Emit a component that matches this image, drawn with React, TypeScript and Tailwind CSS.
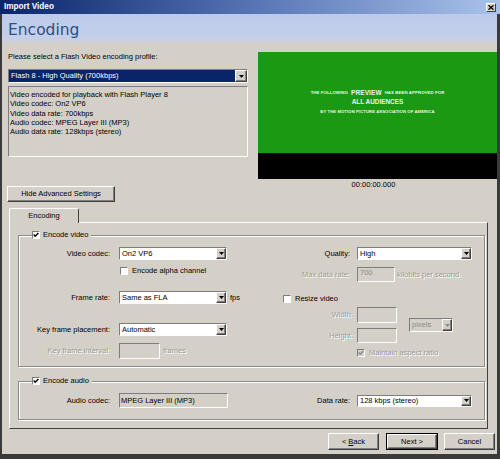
import React from 'react';

const sunken = 'border border-t-[#7d7d7d] border-l-[#7d7d7d] border-r-white border-b-white';
const raised = 'border border-t-white border-l-white border-r-[#404040] border-b-[#404040]';
const etched = 'border border-[#8a8a8a] shadow-[inset_1px_1px_0_#ffffff,1px_1px_0_#ffffff]';
const dim = 'text-[#9d9b95] [text-shadow:1px_1px_0_#ffffff]';

function DropButton({ disabled, w = 'w-[10px]' }: { disabled?: boolean; w?: string }) {
    return (
        <span className={`flex ${w} shrink-0 items-center justify-center bg-[#d4d0c8] ${raised} shadow-[inset_-1px_-1px_0_#808080]`}>
            <svg width="5" height="3" viewBox="0 0 5 3">
                <path d="M0 0h5L2.5 3z" fill={disabled ? '#8a8a8a' : '#000'} />
            </svg>
        </span>
    );
}

interface SelectProps {
    value: string;
    className?: string;
    selected?: boolean;
    disabled?: boolean;
    btn?: string;
}

function Select({ value, className = '', selected, disabled, btn }: SelectProps) {
    return (
        <div className={`flex ${sunken} ${disabled ? 'bg-[#d4d0c8]' : 'bg-white'} ${className}`}>
            <span
                className={`flex min-w-0 flex-1 items-center truncate pl-[2px] ${selected ? 'bg-[#0a246a] text-white' : ''} ${disabled ? 'text-[#8c8a85]' : ''}`}
            >
                {value}
            </span>
            <DropButton disabled={disabled} w={btn} />
        </div>
    );
}

function Check({ checked, disabled }: { checked?: boolean; disabled?: boolean }) {
    return (
        <span className={`flex h-[8px] w-[8px] shrink-0 items-center justify-center ${sunken} ${disabled ? 'bg-[#d4d0c8]' : 'bg-white'}`}>
            {checked && (
                <svg width="6" height="6" viewBox="0 0 6 6">
                    <path d="M0.6 2.6l1.6 1.7L5.4 0.9" stroke={disabled ? '#8a8a8a' : '#000'} strokeWidth="1.4" fill="none" />
                </svg>
            )}
        </span>
    );
}

function Field({ value, className = '' }: { value?: string; className?: string }) {
    return (
        <div className={`flex items-start bg-[#d4d0c8] pl-[2px] pt-[1px] text-[#8c8a85] ${sunken} ${className}`}>
            {value}
        </div>
    );
}

function Button({ children, className = '', isDefault }: { children: React.ReactNode; className?: string; isDefault?: boolean }) {
    const inner = (
        <span className={`flex h-full w-full items-center justify-center bg-[#d4d0c8] ${raised} shadow-[inset_-1px_-1px_0_#808080]`}>
            {children}
        </span>
    );
    return isDefault ? (
        <div className={`flex border border-black ${className}`}>{inner}</div>
    ) : (
        <div className={`flex ${className}`}>{inner}</div>
    );
}

export default function App() {
    return (
        <div className="flex h-[459px] w-[500px] flex-col overflow-hidden bg-[#d4d0c8] font-['Liberation_Sans',Arial,sans-serif] text-[7.5px] leading-none text-black">
            {/* Title bar */}
            <div className="flex h-[14px] shrink-0 items-center justify-between bg-gradient-to-r from-[#0a246a] via-[#5674b4] to-[#aac3ea] px-[4px]">
                <span className="text-[8.2px] font-bold leading-none text-white">Import Video</span>
                <span className={`flex h-[9px] w-[10px] items-center justify-center bg-[#d4d0c8] ${raised}`}>
                    <svg width="6" height="5" viewBox="0 0 6 5">
                        <path d="M0.5 0.3l5 4.4M5.5 0.3l-5 4.4" stroke="#000" strokeWidth="1.3" />
                    </svg>
                </span>
            </div>

            <div className="flex flex-1 flex-col border-b-[5px] border-l-[2px] border-r-[3px] border-[#3a3a3a]">
                {/* Header */}
                <div className="flex h-[31px] shrink-0 items-center bg-[linear-gradient(to_bottom,#bccaeb_0%,#c3cfeb_75%,#d4d0c8_100%)] pl-[6px] pt-[2px]">
                    <span className="font-['DejaVu_Sans',Verdana,sans-serif] text-[15.5px] leading-none text-[#2d4f82]">Encoding</span>
                </div>

                <div className="flex flex-1 flex-col pl-[6px] pt-[6px]">
                    {/* Profile + preview */}
                    <div className="flex gap-[10px]">
                        <div className="flex w-[240px] flex-col">
                            <div className="h-[12px] leading-[12px]">Please select a Flash Video encoding profile:</div>
                            <Select className="mt-[6px] h-[14px]" value="Flash 8 - High Quality (700kbps)" selected btn="w-[12px]" />
                            <div className={`mt-[3px] h-[71px] ${sunken} pl-[1px] pt-[3px] leading-[9.3px]`}>
                                <div>Video encoded for playback with Flash Player 8</div>
                                <div>Video codec: On2 VP6</div>
                                <div>Video data rate: 700kbps</div>
                                <div>Audio codec: MPEG Layer III (MP3)</div>
                                <div>Audio data rate: 128kbps (stereo)</div>
                            </div>
                            <Button className="-ml-[1px] mt-[29px] h-[16px] w-[108px]">Hide Advanced Settings</Button>
                        </div>

                        <div className="flex w-[239px] flex-col">
                            <div className="mt-[1px] flex h-[101px] flex-col items-center justify-center bg-[#1b9913] font-bold text-[#eef4ea]">
                                <div className="flex h-[9px] items-center gap-[3px] text-[4.3px] tracking-[0.1px]">
                                    <span>THE FOLLOWING</span>
                                    <span className="text-[6.5px]">PREVIEW</span>
                                    <span>HAS BEEN APPROVED FOR</span>
                                </div>
                                <div className="flex h-[10px] items-center text-[6.4px]">ALL AUDIENCES</div>
                                <div className="flex h-[9px] items-center text-[4.2px] tracking-[0.1px]">
                                    BY THE MOTION PICTURE ASSOCIATION OF AMERICA
                                </div>
                            </div>
                            <div className="h-[26px] bg-black" />
                            <div className="h-[12px] pr-[8px] text-center leading-[12px]">00:00:00.000</div>
                        </div>
                    </div>

                    {/* Tabs */}
                    <div className="mt-[6px] flex flex-col">
                        <div className="flex pl-[1px]">
                            <div className="relative z-10 -mb-[1px] flex h-[15px] w-[70px] items-center justify-center rounded-t-[2px] border-l border-r border-t border-l-white border-r-[#404040] border-t-white bg-[#d4d0c8] pb-[1px]">
                                Encoding
                            </div>
                        </div>
                        <div className="ml-[1px] w-[479px] border border-b-[#404040] border-l-white border-r-[#404040] border-t-white pb-[8px]">
                            {/* Encode video */}
                            <fieldset className={`ml-[8px] mt-[7px] w-[467px] pb-[7px] ${etched}`}>
                                <legend className="ml-[13px] flex h-[10px] items-center gap-[3px] bg-[#d4d0c8] pr-[3px]">
                                    <Check checked />
                                    <span>Encode video</span>
                                </legend>
                                <div className="flex">
                                    <div className="flex w-[264px] flex-col">
                                        <div className="mt-[7px] flex h-[13px] items-center">
                                            <span className="w-[91px] text-right">Video codec:</span>
                                            <Select className="ml-[9px] h-full w-[108px]" value="On2 VP6" />
                                        </div>
                                        <div className="mt-[6px] flex h-[10px] items-center gap-[4px] pl-[101px]">
                                            <Check />
                                            <span>Encode alpha channel</span>
                                        </div>
                                        <div className="mt-[15px] flex h-[13px] items-center">
                                            <span className="w-[91px] text-right">Frame rate:</span>
                                            <Select className="ml-[9px] h-full w-[108px]" value="Same as FLA" />
                                            <span className="ml-[3px]">fps</span>
                                        </div>
                                        <div className="mt-[19px] flex h-[13px] items-center">
                                            <span className="w-[91px] text-right">Key frame placement:</span>
                                            <Select className="ml-[9px] h-full w-[108px]" value="Automatic" />
                                        </div>
                                        <div className="mt-[7px] flex h-[16px] items-center">
                                            <span className={`w-[91px] text-right ${dim}`}>Key frame interval:</span>
                                            <Field className="ml-[9px] h-full w-[41px]" />
                                            <span className={`ml-[3px] ${dim}`}>frames</span>
                                        </div>
                                    </div>

                                    <div className="flex flex-1 flex-col">
                                        <div className="mt-[7px] flex h-[13px] items-center">
                                            <span className="w-[67px] text-right">Quality:</span>
                                            <Select className="ml-[7px] h-full w-[115px]" value="High" />
                                        </div>
                                        <div className="mt-[7px] flex h-[15px] items-center">
                                            <span className={`w-[67px] text-right ${dim}`}>Max data rate:</span>
                                            <Field className="ml-[7px] h-full w-[38px]" value="700" />
                                            <span className={`ml-[2px] ${dim}`}>kilobits per second</span>
                                        </div>
                                        <div className="mt-[12px] flex h-[10px] items-center gap-[4px]">
                                            <Check />
                                            <span>Resize video</span>
                                        </div>
                                        <div className="mt-[3px] flex items-center">
                                            <div className="flex flex-col">
                                                <div className="flex h-[16px] items-center">
                                                    <span className={`w-[70px] text-right ${dim}`}>Width:</span>
                                                    <Field className="ml-[4px] h-full w-[40px]" />
                                                </div>
                                                <div className="mt-[5px] flex h-[15px] items-center">
                                                    <span className={`w-[70px] text-right ${dim}`}>Height:</span>
                                                    <Field className="ml-[4px] h-full w-[40px]" />
                                                </div>
                                            </div>
                                            <Select className="ml-[12px] h-[14px] w-[44px]" value="pixels" disabled />
                                        </div>
                                        <div className="mt-[5px] flex h-[10px] items-center gap-[4px] pl-[74px]">
                                            <Check checked disabled />
                                            <span className={dim}>Maintain aspect ratio</span>
                                        </div>
                                    </div>
                                </div>
                            </fieldset>

                            {/* Encode audio */}
                            <fieldset className={`ml-[8px] mt-[9px] w-[467px] pb-[11px] ${etched}`}>
                                <legend className="ml-[13px] flex h-[10px] items-center gap-[3px] bg-[#d4d0c8] pr-[3px]">
                                    <Check checked />
                                    <span>Encode audio</span>
                                </legend>
                                <div className="mt-[7px] flex h-[15px] items-center">
                                    <div className="flex w-[264px] items-center">
                                        <span className="w-[91px] text-right">Audio codec:</span>
                                        <div className={`ml-[9px] flex h-[15px] w-[109px] items-center bg-[#d4d0c8] pl-[1px] ${sunken}`}>
                                            MPEG Layer III (MP3)
                                        </div>
                                    </div>
                                    <div className="flex items-center">
                                        <span className="w-[67px] text-right">Data rate:</span>
                                        <Select className="ml-[7px] h-[12px] w-[115px]" value="128 kbps (stereo)" />
                                    </div>
                                </div>
                            </fieldset>
                        </div>
                    </div>

                    {/* Wizard buttons */}
                    <div className="mt-[4px] flex justify-end pr-[2px]">
                        <Button className="h-[17px] w-[51px]">
                            &lt; <u className="ml-[2px]">B</u>ack
                        </Button>
                        <Button className="ml-[7px] h-[17px] w-[52px]" isDefault>
                            Next &gt;
                        </Button>
                        <Button className="ml-[6px] h-[17px] w-[51px]">Cancel</Button>
                    </div>
                </div>
            </div>
        </div>
    );
}
